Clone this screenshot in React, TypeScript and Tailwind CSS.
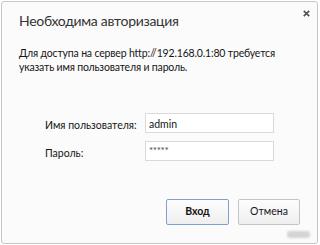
import React from "react";

export default function App() {
  const font = { fontFamily: 'Lato, "Noto Sans", sans-serif' };
  return (
    <div className="w-[320px] h-[245px] bg-white pt-[1px] pl-[1px]" style={font}>
      <div className="relative w-[317px] h-[243px] rounded-[3px] border border-[#c6c6c6] bg-[#fbfbfb] flex flex-col">
        <div className="flex items-start justify-between pl-[17px] pr-[7px] pt-[9px]">
          <div className="whitespace-nowrap text-[14px] leading-[20px] tracking-[-0.3px] text-[#333333]">Необходима авторизация</div>
          <svg width="7" height="7" viewBox="0 0 7 7" className="mt-[-1px]">
            <path d="M0.8 0.8 L6.2 6.2 M6.2 0.8 L0.8 6.2" stroke="#555555" strokeWidth="1.7" />
          </svg>
        </div>
        <div className="pl-[17px] mt-[15px] text-[10.5px] leading-[14px] tracking-[-0.17px] text-[#161616] whitespace-nowrap">
          Для доступа на сервер http://192.168.0.1:80 требуется
          <br />
          указать имя пользователя и пароль.
        </div>
        <div className="mt-[39px] pl-[43px] flex flex-col gap-[8px]">
          <div className="flex items-start">
            <div className="w-[100px] mt-[5px] text-[10.5px] leading-[14px] text-[#161616] whitespace-nowrap">Имя пользователя:</div>
            <div className="w-[129px] h-[20px] border border-[#dadada] bg-white pl-[3px] pt-[3px] text-[10.5px] leading-[14px] text-[#161616]">
              admin
            </div>
          </div>
          <div className="flex items-start">
            <div className="w-[100px] mt-[5px] text-[10.5px] leading-[14px] text-[#161616]">Пароль:</div>
            <div className="w-[129px] h-[20px] border border-[#dadada] bg-white pl-[3px] pt-[3px] text-[10px] leading-[10px] text-[#444444] tracking-[-0.4px]">
              *****
            </div>
          </div>
        </div>
        <div className="mt-[38px] flex justify-end gap-[9px] pr-[17px]">
          <div className="w-[63px] h-[26px] rounded-[2px] border border-[#7da2ce] bg-gradient-to-b from-[#fdfdfd] to-[#efefef] flex items-center justify-center text-[10.5px] font-bold text-[#111111]">
            Вход
          </div>
          <div className="w-[62px] h-[26px] rounded-[2px] border border-[#c4c4c4] bg-gradient-to-b from-[#fdfdfd] to-[#efefef] flex items-center justify-center text-[10.5px] text-[#161616]">
            Отмена
          </div>
        </div>
        <div className="absolute right-[7px] bottom-[5px] w-[23px] h-[7px] rounded-[3px] bg-[#d4d4d4] blur-[1px]" />
      </div>
    </div>
  );
}
